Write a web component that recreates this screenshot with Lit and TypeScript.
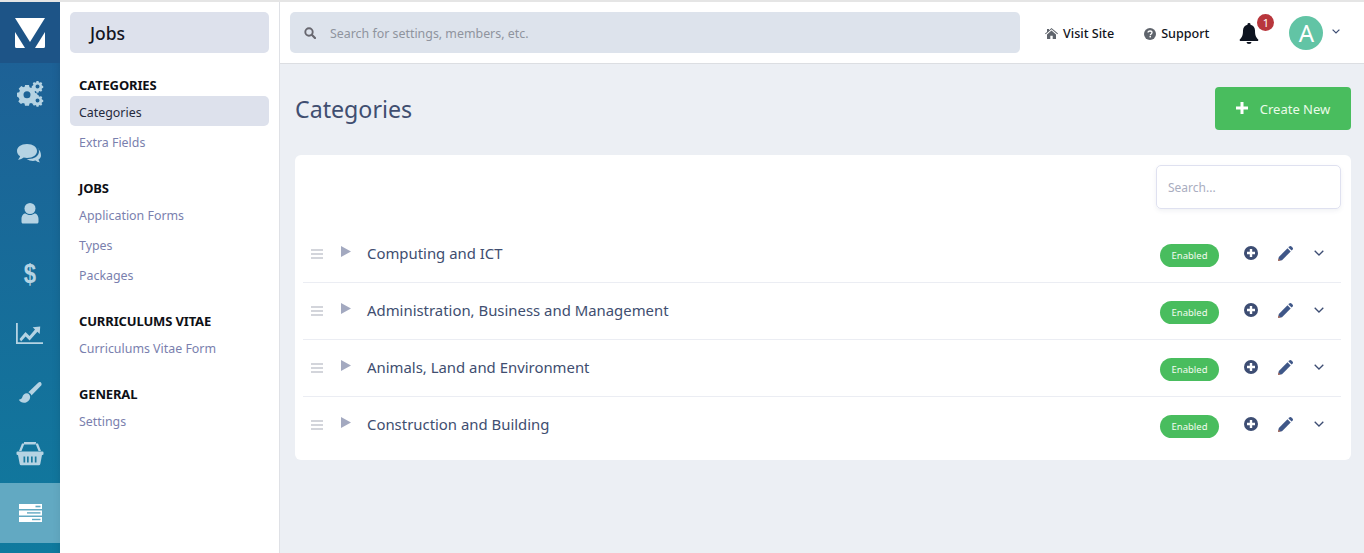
import { LitElement, css, html, svg } from "lit";
import { customElement } from "lit/decorators.js";

const railIcons = [
  svg`<g fill="currentColor"><path fill-rule="evenodd" d="M8 6h4l.5 2.2 1.6.7 2-1.2 2.6 2.7-1.2 1.9.7 1.7 2.2.5v3.8l-2.2.5-.7 1.7 1.2 1.9-2.6 2.7-2-1.2-1.6.7-.5 2.2H8l-.5-2.2-1.6-.7-2 1.2-2.6-2.7 1.2-1.9-.7-1.700L0 17.600v-3.800l2.200-.5.7-1.700-1.200-1.900 2.600-2.700 2 1.200 1.600-.7zM10 12.200a3.500 3.500 0 100 7 3.500 3.500 0 000-7z" transform="translate(1 -1)"/><path fill-rule="evenodd" d="M19.500 1h2l.3 1.300 1 .4 1.200-.6 1.300 1.400-.7 1.100.4 1 1.200.3v2l-1.200.3-.4 1 .7 1.100-1.300 1.400-1.200-.6-1 .4-.3 1.300h-2l-.3-1.300-1-.4-1.200.6-1.300-1.400.7-1.100-.4-1-1.200-.3v-2l1.200-.3.4-1-.7-1.100 1.300-1.400 1.200.6 1-.4zM20.500 4.500a2 2 0 100 4 2 2 0 000-4z" transform="translate(1 0)"/><path fill-rule="evenodd" d="M19.500 15h2l.3 1.300 1 .4 1.200-.6 1.300 1.400-.7 1.100.4 1 1.200.3v2l-1.200.3-.4 1 .7 1.100-1.300 1.400-1.200-.6-1 .4-.3 1.300h-2l-.3-1.300-1-.4-1.200.6-1.300-1.400.7-1.100-.4-1-1.200-.3v-2l1.200-.3.4-1-.7-1.100 1.300-1.400 1.200.6 1-.4zM20.500 18.500a2 2 0 100 4 2 2 0 000-4z" transform="translate(1 0)"/></g>`,
  svg`<g fill="currentColor"><path d="M11 4C5 4 1 7 1 11c0 2.200 1.200 4 3.100 5.200-.3 1.300-1 2.500-2.100 3.500 2.300-.2 4.200-1 5.700-2.200 1.100.3 2.200.5 3.300.5 6 0 10-3 10-7s-4-7-10-7z"/><path d="M23.200 9.500c.5 1 .8 2 .8 3 0 4.400-4.500 7.500-10.500 7.500-.7 0-1.200 0-1.800-.1 1.800 1.300 4.100 2 6.300 2 .9 0 1.700-.1 2.500-.3 1 .9 2.300 1.500 4.500 1.900-.8-.9-1.300-1.800-1.500-2.900 1.600-1 2.500-2.500 2.500-4.100 0-2.700-1-5.300-3.300-7z" transform="translate(-1 -1)"/></g>`,
  svg`<g fill="currentColor"><circle cx="14" cy="8.500" r="5.500"/><path d="M7 23.500c-.8 0-1.500-.7-1.500-1.500v-3c0-3.500 2-5.500 4-5.500 1 .8 2.700 1.500 4.500 1.500s3.500-.7 4.500-1.500c2 0 4 2 4 5.500v3c0 .8-.7 1.500-1.500 1.500z"/></g>`,
  svg`<text x="14" y="23" text-anchor="middle" font-family="Liberation Sans, sans-serif" font-weight="700" font-size="27" fill="currentColor" transform="translate(2.500 0) scale(.82 1)">$</text>`,
  svg`<g fill="currentColor"><path d="M0 3h1.800v19.200H27V24H0z"/><path d="M3.500 19l6-7 4 4 5.500-6.500-2.300-2.300 7.500-.7-.5 7.500-2.300-2.300-7.800 8.800-4-4-4.500 5z"/></g>`,
  svg`<g fill="currentColor" transform="translate(1.500 1.500) scale(.9)"><path d="M26 1c-1-.7-2.200-.3-3 .5L12 12c1.500.5 3 1.800 3.500 3.500L26.300 4.500C27 3.500 27 1.800 26 1z"/><path d="M10.500 13c-3 0-4.500 2-5 4-.4 1.800-1.500 3-4 3.200 1.500 3 5 4 8 3 3.500-1 5-4 4.500-6.700-.3-1.800-1.700-3.500-3.500-3.500z"/></g>`,
  svg`<g fill="currentColor"><path d="M1.500 11.500h25a1 1 0 011 1v1.500a1 1 0 01-1 1H26l-1.700 9a1.500 1.500 0 01-1.500 1.200H5.200a1.500 1.500 0 01-1.500-1.200L2 15h-.5a1 1 0 01-1-1v-1.500a1 1 0 011-1z"/><path d="M3 11l3-7.500h2.500L5.500 11zM25 11L22 3.500h-2.500l3 7.500zM8 2h12v2.500H8z"/></g><g fill="#1a7a9f"><rect x="7.500" y="16.500" width="1.700" height="6"/><rect x="11" y="16.500" width="1.700" height="6"/><rect x="15" y="16.500" width="1.700" height="6"/><rect x="18.800" y="16.500" width="1.700" height="6"/></g>`,
];

const stackIcon = svg`<g fill="#fff"><rect x="0" y="0" width="23" height="5"/><rect x="0" y="6.500" width="23" height="5"/><rect x="0" y="13" width="23" height="5"/></g><g fill="#62a9c2"><rect x="16.500" y="1.700" width="5" height="1.600"/><rect x="8" y="8.200" width="13.500" height="1.400"/><rect x="13" y="14.800" width="8.500" height="1.400"/></g>`;

const menu = [
  { title: "CATEGORIES", links: ["Categories", "Extra Fields"] },
  { title: "JOBS", links: ["Application Forms", "Types", "Packages"] },
  { title: "CURRICULUMS VITAE", links: ["Curriculums Vitae Form"] },
  { title: "GENERAL", links: ["Settings"] },
];

const categories = [
  "Computing and ICT",
  "Administration, Business and Management",
  "Animals, Land and Environment",
  "Construction and Building",
];

@customElement("app-root")
export class AppRoot extends LitElement {
  renderRow(name: string) {
    return html`
      <div class="row">
        <span class="drag"><i></i><i></i><i></i></span>
        <svg class="caret" width="10" height="11" viewBox="0 0 10 11"><path d="M0 0l10 5.500L0 11z" /></svg>
        <span class="name">${name}</span>
        <span class="badge">Enabled</span>
        <svg class="act plus" width="14" height="14" viewBox="0 0 14 14">
          <circle cx="7" cy="7" r="7" fill="#3d4d73" />
          <path d="M5.800 3h2.400v2.800H11v2.400H8.200V11H5.800V8.200H3V5.800h2.800z" fill="#fff" />
        </svg>
        <svg class="act pencil" width="15" height="15" viewBox="0 0 15 15">
          <path d="M0 15l.8-4L9.500 2.300l3.200 3.200L4 14.200z" fill="#3f5788" />
          <path d="M10.400 1.400L11.300.500a1.500 1.500 0 012.100 0l1.100 1.100a1.500 1.500 0 010 2.100l-.9.900z" fill="#3f5788" />
          <path d="M0 15l.5-2.600 2.100 2.100z" fill="#b5705a" />
        </svg>
        <svg class="act chev" width="10" height="6" viewBox="0 0 10 6">
          <path d="M.7.700L5 5l4.300-4.300" fill="none" stroke="#3d4d73" stroke-width="1.300" />
        </svg>
      </div>
    `;
  }

  render() {
    return html`
      <div class="shell">
        <nav class="rail">
          <div class="logo">
            <svg width="30" height="30" viewBox="0 0 30 30">
              <path d="M0 0h30L15 24zM0 14l10 16H1.500A1.500 1.500 0 010 28.500zM30 14L20 30h8.500a1.500 1.500 0 001.500-1.500z" fill="#fff" />
            </svg>
          </div>
          ${railIcons.map(
            (icon) => html`<div class="rail-item"><svg width="28" height="28" viewBox="0 0 28 28">${icon}</svg></div>`
          )}
          <div class="rail-item active"><svg width="23" height="18" viewBox="0 0 23 18">${stackIcon}</svg></div>
        </nav>

        <aside class="side">
          <div class="side-head">Jobs</div>
          ${menu.map(
            (group) => html`
              <div class="group">
                <h4>${group.title}</h4>
                ${group.links.map(
                  (link) => html`<a class=${link === "Categories" ? "link on" : "link"}>${link}</a>`
                )}
              </div>
            `
          )}
        </aside>

        <div class="content">
          <header class="top">
            <div class="top-search">
              <svg width="12" height="12" viewBox="0 0 12 12">
                <circle cx="5" cy="5" r="3.700" fill="none" stroke="#67676f" stroke-width="1.900" />
                <path d="M7.800 7.800L11 11" stroke="#67676f" stroke-width="2.200" stroke-linecap="round" />
              </svg>
              <span>Search for settings, members, etc.</span>
            </div>
            <a class="top-link visit">
              <svg width="13" height="11" viewBox="0 0 13 11">
                <path d="M6.500 0L13 5.600l-.7.700-5.800-5-5.800 5-.7-.7 2-1.700V1h2v1.200zM2 6.500l4.500-3.900L11 6.500V11H7.700V7.800H5.300V11H2z" fill="#5f646c" />
              </svg>
              Visit Site
            </a>
            <a class="top-link support">
              <svg width="12" height="12" viewBox="0 0 12 12">
                <circle cx="6" cy="6" r="6" fill="#5f646c" />
                <path d="M4 4.500C4 3.500 5 3 6 3s2 .6 2 1.600C8 6 6.300 5.900 6.300 7.200" fill="none" stroke="#fff" stroke-width="1.300" />
                <rect x="5.500" y="8" width="1.500" height="1.400" fill="#fff" />
              </svg>
              Support
            </a>
            <div class="bell">
              <svg width="20" height="21" viewBox="0 0 20 21">
                <path d="M10 0a1.500 1.500 0 011.500 1.700C14.300 2.300 16 4.500 16 7.500c0 5 1 6.800 3.200 9 .4.600 0 1.500-.8 1.500H1.600c-.8 0-1.200-.9-.8-1.500C3 14.300 4 12.500 4 7.500c0-3 1.700-5.200 4.500-5.800A1.500 1.500 0 0110 0z" fill="#0e1420" />
                <path d="M7.500 19h5a2.500 2 0 01-5 0z" fill="#0e1420" />
              </svg>
              <span class="count">1</span>
            </div>
            <span class="avatar">A</span>
            <svg class="user-chev" width="8" height="5" viewBox="0 0 8 5">
              <path d="M.6.600L4 4l3.400-3.400" fill="none" stroke="#3d4d73" stroke-width="1.200" />
            </svg>
          </header>

          <main class="main">
            <div class="title-row">
              <h1>Categories</h1>
              <button class="create">
                <svg width="12" height="12" viewBox="0 0 12 12"><path d="M4.500 0h3v4.500H12v3H7.500V12h-3V7.500H0v-3h4.500z" fill="#fff" /></svg>
                <span>Create New</span>
              </button>
            </div>
            <section class="card">
              <div class="card-tools"><div class="find">Search...</div></div>
              ${categories.map((c) => this.renderRow(c))}
            </section>
          </main>
        </div>
      </div>
    `;
  }

  static styles = css`
    :host {
      display: block;
      font-family: "Noto Sans", "Open Sans", sans-serif;
    }

    .shell {
      display: flex;
      height: 553px;
      overflow: hidden;
      border-top: 2px solid #e5e5e5;
      box-sizing: border-box;
      background: #fff;
    }

    .rail {
      width: 60px;
      flex: none;
      background: linear-gradient(180deg, #1f5e95 0%, #0f7a9e 100%);
      color: #b5d3e3;
      box-shadow: inset -8px 0 8px -8px rgba(0, 0, 0, 0.12);
    }

    .logo {
      height: 61px;
      background: #1d5487;
      display: flex;
      align-items: center;
      justify-content: center;
    }

    .rail-item {
      height: 60px;
      display: flex;
      align-items: center;
      justify-content: center;
    }

    .rail-item svg {
      margin-top: 2px;
    }

    .rail-item.active {
      background: #62a9c2;
      box-shadow: inset -8px 0 8px -8px rgba(0, 0, 0, 0.08);
    }

    .rail-item.active svg {
      margin-top: 0;
    }

    .side {
      flex: none;
      border-right: 1px solid #dfe1e6;
      padding: 10px 10px 0;
      box-sizing: content-box;
      width: 199px;
    }

    .side-head {
      height: 41px;
      background: #dde1ec;
      border-radius: 5px;
      padding-left: 20px;
      font-size: 17.500px;
      font-weight: 500;
      line-height: 43px;
      color: #14161f;
    }

    .group {
      margin-top: 22.500px;
    }

    .group:first-of-type {
      margin-top: 21px;
    }

    .group h4 {
      margin: 0 0 1.500px;
      padding-left: 9px;
      font-size: 13px;
      line-height: 19px;
      font-weight: 700;
      color: #0e1016;
      letter-spacing: -0.15px;
    }

    .group:first-of-type h4 {
      margin-bottom: 2px;
    }

    .link {
      display: block;
      height: 30px;
      line-height: 33px;
      padding-left: 9px;
      font-size: 12.400px;
      color: #7a7fae;
      border-radius: 5px;
    }

    .link.on {
      background: #dde1ec;
      color: #252a3d;
    }

    .content {
      flex: 1;
      min-width: 0;
      display: flex;
      flex-direction: column;
    }

    .top {
      height: 62px;
      flex: none;
      box-sizing: border-box;
      border-bottom: 1px solid #dcdee2;
      padding: 0 0 0 10px;
      display: flex;
      align-items: center;
    }

    .top-search {
      width: 730px;
      height: 41px;
      margin-top: 0;
      background: #dde3ec;
      border-radius: 5px;
      display: flex;
      align-items: center;
      gap: 14px;
      padding-left: 14px;
      box-sizing: border-box;
      font-size: 12.400px;
      color: #8f949e;
    }

    .top-search span {
      margin-top: 1px;
    }

    .top-link {
      display: flex;
      align-items: center;
      gap: 5px;
      font-size: 12.600px;
      font-weight: 500;
      color: #11141c;
      margin-top: 2px;
    }

    .visit {
      margin-left: 25px;
    }

    .support {
      margin-left: 30px;
    }

    .bell {
      position: relative;
      margin-left: 30px;
      width: 20px;
      height: 21px;
      top: 1px;
    }

    .count {
      position: absolute;
      left: 18px;
      top: -9px;
      width: 17px;
      height: 17px;
      border-radius: 50%;
      background: #b8363c;
      color: #fff;
      font-size: 11px;
      line-height: 17px;
      text-align: center;
    }

    .avatar {
      margin-left: 30px;
      margin-top: 1px;
      width: 34px;
      height: 34px;
      border-radius: 50%;
      background: #62c4a5;
      color: #fff;
      font-size: 24px;
      line-height: 34px;
      text-align: center;
    }

    .user-chev {
      margin-left: 9px;
      margin-top: -3px;
    }

    .main {
      flex: 1;
      background: #eceff4;
      padding: 22px 13px 0 15px;
    }

    .title-row {
      display: flex;
      justify-content: space-between;
      align-items: center;
      height: 44px;
      margin-bottom: 25px;
    }

    h1 {
      margin: 2px 0 0;
      font-size: 23.200px;
      font-weight: 400;
      color: #404e70;
    }

    .create {
      width: 136px;
      height: 43px;
      border: none;
      border-radius: 4px;
      background: #49bd5e;
      color: #eafbe9;
      font: inherit;
      font-size: 13px;
      display: flex;
      align-items: center;
      justify-content: center;
      gap: 12px;
    }

    .create span {
      margin-top: 1px;
    }

    .card {
      background: #fff;
      border-radius: 6px;
      height: 305px;
      padding: 10px 10px 0 8px;
      box-sizing: border-box;
    }

    .card-tools {
      display: flex;
      justify-content: flex-end;
      height: 61px;
    }

    .find {
      width: 185px;
      height: 44px;
      box-sizing: border-box;
      border: 1px solid #dfe1f0;
      border-radius: 5px;
      box-shadow: 0 2px 4px rgba(80, 90, 130, 0.08);
      padding-left: 11px;
      font-size: 12px;
      line-height: 44px;
      color: #a9adc0;
    }

    .row {
      height: 57px;
      box-sizing: border-box;
      border-bottom: 1px solid #ebedf3;
      display: flex;
      align-items: center;
      position: relative;
    }

    .row:last-child {
      border-bottom-color: transparent;
    }

    .drag {
      width: 12px;
      margin-left: 8px;
      display: flex;
      flex-direction: column;
      gap: 2px;
      margin-top: 0;
    }

    .drag i {
      height: 2px;
      background: #d3d5db;
    }

    .caret {
      margin-left: 18px;
      margin-top: -5px;
      fill: #a3a9c0;
    }

    .name {
      margin-left: 16px;
      margin-top: -2px;
      font-size: 14.900px;
      color: #404e70;
      flex: 1;
    }

    .badge {
      width: 59px;
      height: 23px;
      border-radius: 12px;
      background: #49bd5e;
      color: #f2fbef;
      font-size: 9.500px;
      line-height: 23px;
      text-align: center;
      margin-top: 2px;
    }

    .act {
      margin-top: -2px;
    }

    .plus {
      margin-left: 25px;
    }

    .pencil {
      margin-left: 20px;
    }

    .chev {
      margin-left: 21px;
      margin-right: 17px;
    }
  `;
}

declare global {
  interface HTMLElementTagNameMap {
    "app-root": AppRoot;
  }
}
